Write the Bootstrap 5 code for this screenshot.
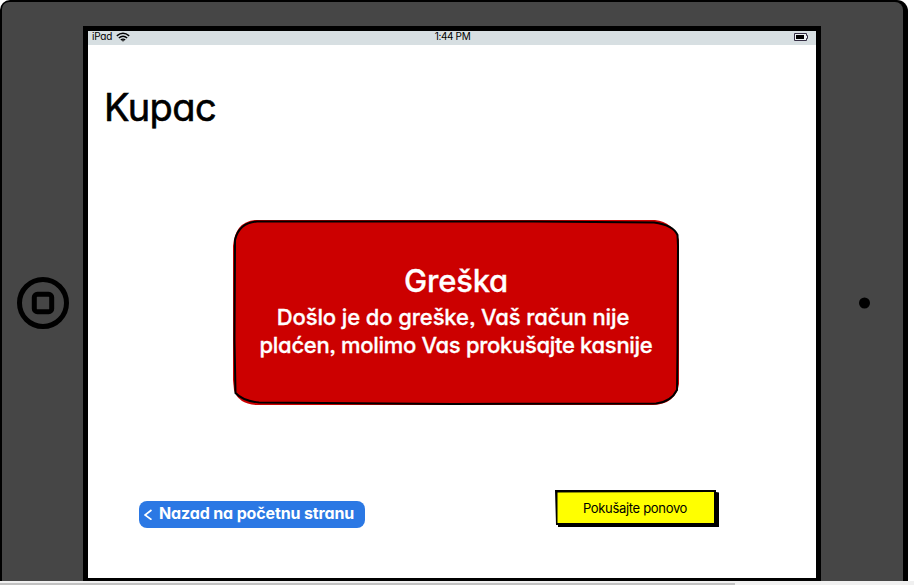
<!DOCTYPE html>
<html lang="sr-Latn">
<head>
<meta charset="utf-8">
<meta name="viewport" content="width=device-width, initial-scale=1">
<title>Kupac</title>
<link rel="stylesheet" href="https://cdn.jsdelivr.net/npm/bootstrap@5.3.0/dist/css/bootstrap.min.css">
<style>
body{font-family:Inter,"Liberation Sans",sans-serif;font-feature-settings:"cv11","ss03";height:585px;color:#000}
.tablet{width:908px;background:#000;border-radius:10px 11px 0 0;padding:2px 5px 0 2px}
.bezel{background:#464646;border-radius:7px 8px 0 0}
.side-left{width:81px;padding-top:22px}
.side-right{padding:22px 0 0 3px}
.screen{width:738px;margin-top:24px;border:5px solid #000;border-bottom-width:3px}
.status{height:14px;background:#d7dfe2;font-size:10px;line-height:11px;padding:0 7px 0 4px}
.status > span{flex:1 1 0}
.status svg{display:block}
.status time{letter-spacing:-.35px;padding-left:4px}
.device-name{letter-spacing:-.2px}
.title{font-size:38px;line-height:46px;margin:39px 0 0 16px;letter-spacing:-.55px;-webkit-text-stroke:.6px #000}
.alert-box{width:446px;height:185px;margin:90px 0 0 145px;padding-top:42px;color:#fff;-webkit-text-stroke:.3px #fff}
.alert-box .sketch{left:0;top:0}
.alert-box h2{font-size:31px;line-height:38px;font-weight:500;letter-spacing:-.2px}
.alert-box p{font-size:22px;line-height:28px;font-weight:500;white-space:nowrap;margin-top:3px}
.l1{letter-spacing:-.1px;margin-right:6px}
.l2{letter-spacing:-.31px}
.actions{margin:85px 97px 0 51px}
.back{width:226px;height:27px;margin-top:11px;background:#2b78e4;border-radius:8px;font-size:16px;line-height:25px;padding:0 0 2px 5px;letter-spacing:-.14px}
.back svg{margin-right:7px}
.retry{width:164px;height:37px;font-size:13px;line-height:32px;letter-spacing:-.32px}
.retry .sketch{left:0;top:0}
.retrytext{left:-2px;top:-1px}
.scroll{height:4px;background:#f0f0f0;padding-top:2px}
.thumb{width:735px;height:2px;background:#c1c1c1}
</style>
<script src="https://cdn.jsdelivr.net/npm/bootstrap@5.3.0/dist/js/bootstrap.bundle.min.js"></script>
</head>
<body class="d-flex flex-column overflow-hidden bg-white">
<div class="tablet d-flex flex-fill">
  <div class="bezel d-flex flex-fill">
    <div class="side-left d-flex align-items-center justify-content-center flex-shrink-0">
      <svg width="54" height="54" viewBox="0 0 54 54" fill="none" stroke="#000" stroke-width="5"><circle cx="27" cy="27" r="23.5"/><rect x="18.300" y="18.3" width="17.4" height="17.4" rx="3"/></svg>
    </div>
    <main class="screen bg-white flex-shrink-0">
      <div class="status d-flex">
        <span class="d-flex"><span class="device-name">iPad</span>
          <svg class="ms-1" width="14" height="12" viewBox="0 0 14 12" fill="none" stroke="#000" stroke-width="1.4"><path d="M.8 4.9Q7-.4 13.2 4.9M2.8 7Q7 3.500 11.2 7M4.8 9Q7 7.2 9.2 9"/><path d="M5.6 9.2h2.8L7 10.8z" fill="#000" stroke="none"/></svg></span>
        <time>1:44 PM</time>
        <span class="d-flex justify-content-end"><svg width="16" height="12" viewBox="0 0 16 12"><path d="M1.5 2.5h12v2h1v3h-1v2h-12z" fill="#eef2f4" stroke="#332c42"/><path d="M3 4h8v4H3z"/></svg></span>
      </div>
      <h1 class="title fw-normal">Kupac</h1>
      <section class="alert-box position-relative text-center" role="alert">
        <svg class="sketch position-absolute" width="446" height="185" viewBox="0 0 446 185"><path d="M22 0H422Q440 2 446 20V164Q443 184 420 185H24Q5 184 1 170L0 160V26Q2 2 22 0Z" fill="#c00"/><path d="M24 1.5L300 1.5 421 2.5Q440 5 444.500 15L445 26 444.5 130 444 170Q438 182 423 183.5L220 184 26 182.5Q10 181 2.5 173L1.5 120 2 20Q6 3 24 1.5Z" fill="none" stroke="#000" stroke-width="2"/></svg>
        <div class="position-relative"><h2 class="m-0">Greška</h2>
        <p class="mb-0"><span class="l1">Došlo je do greške, Vaš račun nije</span><br><span class="l2">plaćen, molimo Vas prokušajte kasnije</span></p></div>
      </section>
      <div class="actions d-flex justify-content-between align-items-start">
        <a href="#" class="back d-flex align-items-center text-white text-decoration-none fw-bold"><svg class="flex-shrink-0" width="8" height="12" viewBox="0 0 8 12" fill="none" stroke="#fff" stroke-width="1.7"><path d="M7.5 2L1 7l6.5 4.700"/></svg><span>Nazad na početnu stranu</span></a>
        <button type="button" class="retry position-relative border-0 bg-transparent p-0"><svg class="sketch position-absolute" width="164" height="37" viewBox="0 0 164 37"><path d="M2 0L161 0V2L164 2.500V37H3V35H1L0 0Z"/><path d="M2.500 2.500L159 2V33H2.500Z" fill="#ff0"/></svg><span class="retrytext position-relative">Pokušajte ponovo</span></button>
      </div>
    </main>
    <div class="side-right d-flex flex-fill align-items-center justify-content-center"><svg width="12" height="12" viewBox="0 0 12 12"><circle cx="6.500" cy="6" r="5.500"/></svg></div>
  </div>
</div>
<div class="scroll"><div class="thumb"></div></div>
</body>
</html>
